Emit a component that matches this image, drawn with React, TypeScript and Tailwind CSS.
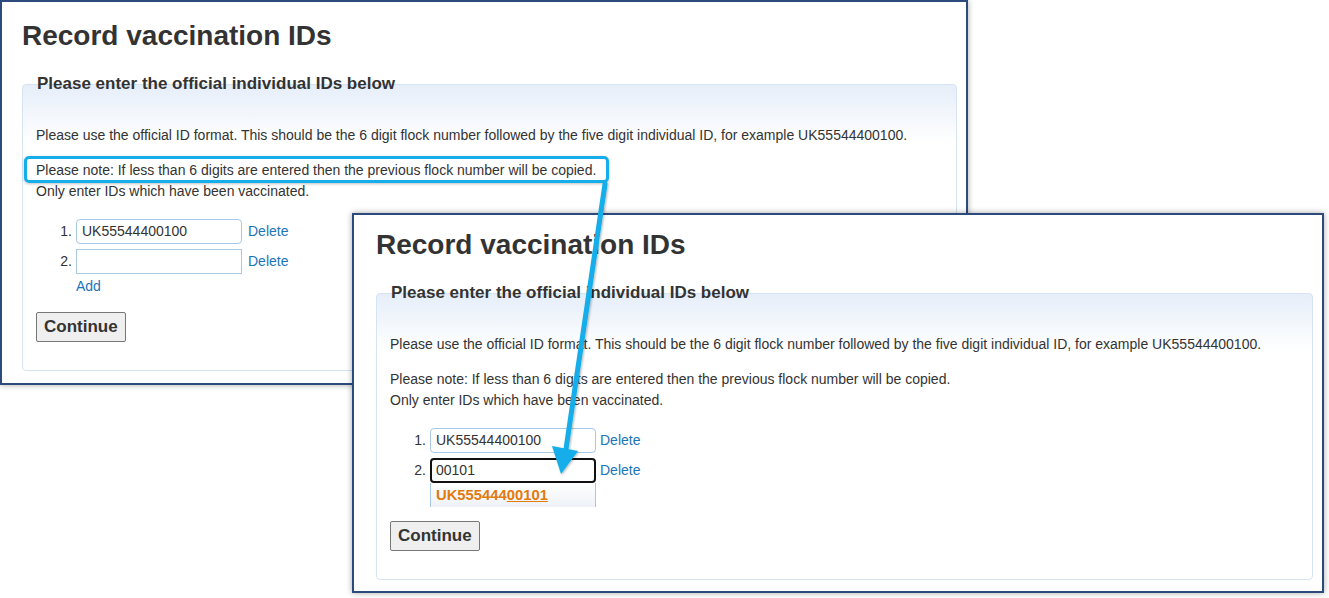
import React from "react";

type WindowProps = {
  className: string;
  topPad: string;
  bottomPad: string;
  indent: string;
  secondValue: string;
  focused?: boolean;
};

function RecordWindow({
  className,
  topPad,
  bottomPad,
  indent,
  secondValue,
  focused,
}: WindowProps) {
  return (
    <div
      className={`absolute border-2 border-[#2c4a7c] bg-white shadow-[0_0_6px_rgba(0,0,0,0.35)] ${className} ${topPad} ${bottomPad}`}
    >
      <h1 className={`text-[28px] leading-[32px] font-bold text-[#333] ${indent}`}>
        Record vaccination IDs
      </h1>

      <div
        className={`mr-[9px] mt-[32px] rounded-[4px] border border-[#d5e3f3] bg-linear-to-b from-[#e6eef9] via-white via-20% to-white px-[13px] pb-[28px] ${indent}`}
      >
        <h2 className="-mt-[11px] ml-[1px] text-[17px] leading-[20px] font-bold text-[#333]">
          Please enter the official individual IDs below
        </h2>

        <p className="mt-[31px] text-[14px] leading-[21px] text-[#333]">
          Please use the official ID format. This should be the 6 digit flock
          number followed by the five digit individual ID, for example
          UK55544400100.
        </p>

        <p className="mt-[14px] text-[14px] leading-[21px] text-[#333]">
          Please note: If less than 6 digits are entered then the previous flock
          number will be copied.
          <br />
          Only enter IDs which have been vaccinated.
        </p>

        <div className="mt-[17px] flex flex-col gap-[5px] text-[14px] text-[#333]">
          <div className="flex h-[25px] items-center">
            <span className="w-[36px] text-right">1.</span>
            <div className="ml-[4px] flex h-[25px] w-[166px] items-center rounded-[4px] border border-[#a9c8e4] bg-white px-[5px]">
              UK55544400100
            </div>
            <a className={`${focused ? "ml-[4px]" : "ml-[6px]"} text-[#1b75bb]`} href="#">
              Delete
            </a>
          </div>
          <div className="flex h-[25px] items-center">
            <span className="w-[36px] text-right">2.</span>
            <div className="relative ml-[4px]">
              <div
                className={`flex h-[25px] w-[166px] items-center bg-white ${
                  focused
                    ? "rounded-[4px] border-2 border-[#111] px-[4px]"
                    : "border border-[#a9c8e4] px-[5px]"
                }`}
              >
                {secondValue}
              </div>
              {focused && (
                <div className="absolute left-0 top-full z-10 h-[24px] w-[166px] overflow-hidden border-x border-[#a9c8e4] bg-linear-to-b from-white to-[#eef2f8] px-[5px] pt-[3px] text-[14.8px] font-bold leading-[18px] text-[#e27a0c]">
                  UK555444<span className="underline">00101</span>
                </div>
              )}
            </div>
            <a className={`${focused ? "ml-[4px]" : "ml-[6px]"} text-[#1b75bb]`} href="#">
              Delete
            </a>
          </div>
        </div>

        <a
          className={`ml-[40px] mt-[2px] block text-[14px] leading-[21px] text-[#1b75bb] ${
            focused ? "invisible" : ""
          }`}
          href="#"
        >
          Add
        </a>

        <button className="mt-[15px] h-[30px] rounded-[2px] border border-[#777] bg-[#efefef] px-[7px] text-[17px] font-bold text-[#333]">
          Continue
        </button>
      </div>
    </div>
  );
}

export default function App() {
  return (
    <div className="relative h-[598px] w-[1329px] overflow-hidden bg-white font-['Liberation_Sans',Arial,sans-serif]">
      <RecordWindow
        className="left-0 top-0 w-[968px]"
        topPad="pt-[18px]"
        bottomPad="pb-[12px]"
        indent="ml-[20px]"
        secondValue=""
      />

      {/* callout on the note line */}
      <div className="absolute left-[24px] top-[156px] h-[27px] w-[585px] rounded-[5px] border-[3px] border-[#15aeea] shadow-[0_1px_3px_rgba(0,0,0,0.25)]" />

      <RecordWindow
        className="left-[352px] top-[213px] w-[972px]"
        topPad="pt-[14px]"
        bottomPad="pb-[11px]"
        indent="ml-[22px]"
        secondValue="00101"
        focused
      />

      {/* arrow */}
      <svg
        className="pointer-events-none absolute left-0 top-0 z-20"
        width="1329"
        height="598"
        viewBox="0 0 1329 598"
      >
        <defs>
          <filter id="sh" x="-20%" y="-20%" width="140%" height="140%">
            <feDropShadow dx="1" dy="1" stdDeviation="1.2" floodColor="#000" floodOpacity="0.3" />
          </filter>
        </defs>
        <g filter="url(#sh)">
          <line
            x1="605"
            y1="184"
            x2="566"
            y2="449"
            stroke="#12aeea"
            strokeWidth="5"
            strokeLinecap="round"
          />
          <polygon points="552,446 578,451 561,474" fill="#12aeea" />
        </g>
      </svg>
    </div>
  );
}
